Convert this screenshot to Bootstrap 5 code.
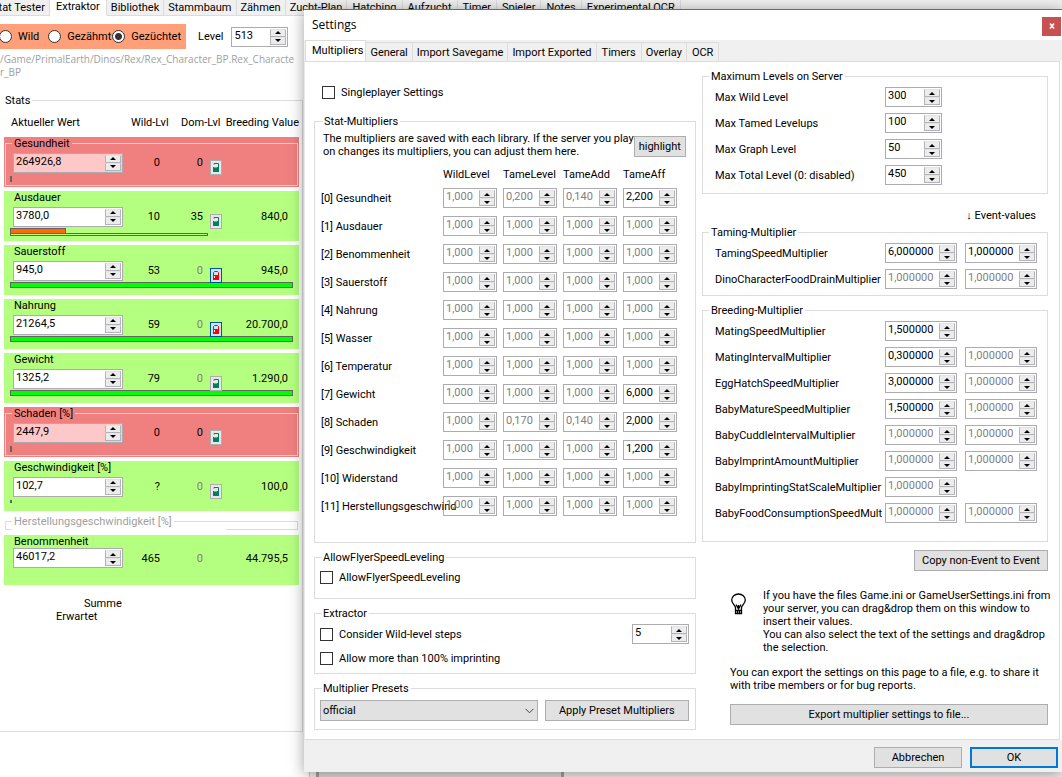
<!DOCTYPE html>
<html lang="de">
<head>
<meta charset="utf-8">
<meta name="viewport" content="width=device-width, initial-scale=1">
<title>Settings</title>
<link href="https://cdn.jsdelivr.net/npm/bootstrap@5.3.0/dist/css/bootstrap.min.css" rel="stylesheet">
<style>
  body { font: 11px/13px Roboto, "Liberation Sans", sans-serif; color: #000; background: #fff; }
  fieldset { border: 1px solid #dcdcdc; position: relative; min-width: 0; }
  legend { float: none; width: auto; font-size: 11px; line-height: 13px; margin: 0 0 0 6px; padding: 0 2px; white-space: nowrap; }
  label { white-space: nowrap; }

  /* numeric up-down */
  .spin { display: inline-flex; height: 20px; border: 1px solid #acacb0; background: #fff; padding: 1px; }
  .spin input { flex: 1 1 0; min-width: 0; width: 0; border: 0; padding: 0 0 2px 1px; background: transparent; color: inherit; font-size: 11px; line-height: 14px; outline: 0; }
  .spin .arrows { display: flex; flex-direction: column; width: 16px; flex: none; background: #f0f0f0; }
  .spin .arrows button { flex: 1; border: 1px solid #b4b4b8; border-top-color: #e4e4e4; background: #ececec; padding: 0; display: flex; align-items: center; justify-content: center; }
  .arrows button::before { content: ""; border: 3px solid transparent; border-top: 0; border-bottom-color: #000; }
  .arrows button + button::before { border: 3px solid transparent; border-bottom: 0; border-top-color: #000; }
  .w-stat { width: 54px; } .w-lvl { width: 57px; } .w-mult { width: 72px; } .w-value { width: 110px; }
  .dim { color: #808080; }

  /* tabs */
  .tabstrip { background: #f0f0f0; }
  .tabstrip button { border: 1px solid #dcdcdc; border-left: 0; background: #f0f0f0; color: #000; padding: 0 4px; white-space: nowrap; flex: none; }
  .tabstrip button.current { background: #fff; border-bottom-color: #fff; }
  .app-tabs { height: 16px; overflow: hidden; margin-left: -12px; }
  .app-tabs button { border-top: 0; height: 16px; }
  .app-tabs button:nth-child(n+7) { padding: 0 5px; }
  .app-tabs button.current { padding: 0 6px 4px; }

  .push { border: 1px solid #adadad; background: #e1e1e1; color: #000; height: 21px; padding: 0 4px; white-space: nowrap; }
  .push.default { border: 2px solid #0078d7; }
  .tick { appearance: none; width: 13px; height: 13px; border: 1px solid #333; background: #fff; margin: 0; flex: none; }
  .rad { appearance: none; width: 13px; height: 13px; border: 1px solid #333; border-radius: 50%; background: #fff; margin: 0; flex: none; }
  .rad:checked { background: radial-gradient(circle, #333 0 3px, #fff 4px); }
  .tick + label, .rad + label { padding-left: 6px; }

  /* extractor page */
  .extractor { width: 303px; }
  .kinds { background: #ffa07a; height: 25px; width: 187px; margin-left: -1px; padding-right: 1px; justify-content: space-between; padding-right: 5px; }
  .path { color: #a0a0a0; white-space: nowrap; font-family: "Open Sans", sans-serif; font-size: 10px; }
  .stats { border-width: 1px 1px 1px 0; height: 638px; padding: 0 3px 0 4px; margin-top: 15px; }
  .stats > legend { margin-left: 0; padding-left: 5px; }
  .stats > legend { margin-left: -4px; background: #fff; }
  .statcols, .statrow { display: grid; align-items: center; }
  .statcols { grid-template-columns: 120px 46px 44px 1fr; padding: 4px 0 0 7px; height: 26px; white-space: nowrap; }
  .stat { height: 50px; margin-bottom: 4px; padding: 0 1px 1px; background: #b4ff80; }
  .stat.bad { background: #f08080; }
  .stat fieldset { height: 49px; padding: 0; }
  .stat .spin.bad-value { background: #ffc8c8; }
  .statrow { grid-template-columns: 110px 37px 43px 22px 1fr; padding: 0 9px 0 7px; height: 20px; text-align: right; }
  .lock { width: 12px; height: 15px; border: 1px solid #adadad; background: #e8e8e8; padding: 0; display: flex; align-items: center; justify-content: center; margin: 10px 0 0 7px; }
  .lock svg { flex: none; }
  .lock.on { border-color: #00549c; background: #cce4f7; }
  .bars { padding-left: 4px; margin-top: 4px; }
  .meter { height: 6px; border: 1px solid #646464; }
  .meter.thin { height: 3px; margin-top: -1px; }
  .stub { width: 2px; height: 6px; background: #646464; margin-top: 6px; }
  .stub.tiny { height: 3px; }
  .craft { height: 15px; margin: 0 1px 5px; color: #a0a0a0; }
  .craft::after { content: ""; position: absolute; left: 5px; right: 71px; bottom: -1px; height: 1px; background: #fff; }

  .behind { border-left: 1px solid #c8c8c8; background: #f0f0f0; margin-left: 6px; }
  .behind .panelbox { width: 248px; margin-left: 6px; border: solid #a0a0a0; border-width: 0 3px; background: #dedede; }

  /* settings dialog */
  .settings { position: absolute; top: 9px; left: 304px; right: 0; border-top: 1px solid #6a6a6a; background: #fff; box-shadow: 0 2px 14px rgba(0,0,0,.38); }
  .titlebar { height: 30px; font: 12px/16px "Open Sans", sans-serif; padding: 0 1px 0 8px; }
  .close-x { width: 19px; height: 19px; background: #c75050; border: 0; padding: 0; display: flex; align-items: center; justify-content: center; margin-top: 2px; }
  .set-tabs { height: 21px; padding-left: 1px; }
  .set-tabs button { height: 19px; border-bottom: 0; }
  .set-tabs button.current { height: 21px; padding: 0 2px 2px 6px; border-left: 1px solid #dcdcdc; }
  .set-tabs .roomy { padding: 0 5px; }
  .set-page { margin-right: 2px; border: 1px solid #dcdcdc; border-left-color: #e8e8e8; padding: 8px 11px 9px 9px; gap: 6px; }
  .col-main { flex: 382 1 0; min-width: 0; }
  .col-side { flex: 346 1 0; min-width: 0; }
  .col-main legend { margin-left: 2px; padding-left: 1px; }
  .grp { padding: 0 6px 0 5px; }
  .grp-stat { padding: 0 12px 22px 6px; }
  .grp-stat .intro { padding: 4px 0 0 2px; white-space: nowrap; }
  .grp-fly { padding-bottom: 14px; }
  .fly-row { padding-top: 7px; }
  .multi { table-layout: fixed; width: 100%; margin: 0; }
  .multi .num { width: 60px; }
  .multi th { font-weight: 400; padding: 0; white-space: nowrap; }
  .multi thead th { height: 26px; vertical-align: bottom; padding-bottom: 3px; }
  .multi td { padding: 0; height: 28px; }
  .multi td .spin { display: flex; margin-left: auto; margin-right: 6px; }
  .multi thead th { text-align: left; }
  .sliders { display: grid; grid-template-columns: minmax(0, 1fr) 72px 72px; column-gap: 8px; grid-auto-rows: 20px; row-gap: 6px; align-items: center; padding: 4px 10px 0 12px; }
  .sliders label { grid-column: 1; }
  .events-head { padding: 15px 12px 4px 0; text-align: right; }
  .grp-taming { padding-bottom: 6px; }
  .grp-breeding { padding-bottom: 18px; }
  .presets { display: grid; grid-template-columns: 217fr 144fr; gap: 7px; padding-top: 5px; }
  .picker { appearance: none; border: 1px solid #adadad; border-radius: 0; background: #e1e1e1; height: 21px; padding: 0 2px; color: #000; width: 100%; }
  .pickwrap { position: relative; }
  .pickwrap svg { position: absolute; right: 4px; top: 8px; pointer-events: none; }
  .wide { min-width: 134px; }
  .tip { padding: 18px 0 0 28px; }
  .foot { background: #f0f0f0; height: 32px; padding: 7px 4px 0 0; gap: 8px; }
  .foot .push { width: 88px; }
</style>
</head>
<body>
<div class="d-flex flex-column min-vh-100 overflow-hidden">
  <nav class="tabstrip" aria-label="Hauptbereiche">
    <div class="app-tabs d-flex">
      <button type="button">Stat Tester</button><button type="button" class="current">Extraktor</button><button type="button">Bibliothek</button><button type="button">Stammbaum</button><button type="button">Zähmen</button><button type="button">Zucht-Plan</button><button type="button">Hatching</button><button type="button">Aufzucht</button><button type="button">Timer</button><button type="button">Spieler</button><button type="button">Notes</button><button type="button">Experimental OCR</button>
    </div>
  </nav>
  <div class="d-flex flex-grow-1">
    <section class="extractor flex-shrink-0">
      <div class="d-flex align-items-center mt-2">
        <div class="kinds d-flex align-items-center">
          <span class="d-flex align-items-center"><input class="rad" type="radio" name="kind" id="k1"><label for="k1" class="pe-2">Wild</label></span>
          <span class="d-flex align-items-center"><input class="rad" type="radio" name="kind" id="k2"><label for="k2">Gezähmt</label></span>
          <span class="d-flex align-items-center"><input class="rad" type="radio" name="kind" id="k3" checked><label for="k3">Gezüchtet</label></span>
        </div>
        <label for="lvl" class="ms-2 me-2 ps-1">Level</label>
        <span class="spin w-lvl"><input id="lvl" value="513"><span class="arrows"><button type="button" aria-label="+"></button><button type="button" aria-label="-"></button></span></span>
      </div>
      <div class="path mt-1">/Game/PrimalEarth/Dinos/Rex/Rex_Character_BP.Rex_Characte<br>r_BP</div>
      <fieldset class="stats">
        <legend>Stats</legend>
        <div class="statcols mb-1"><span>Aktueller Wert</span><span>Wild-Lvl</span><span class="ms-1">Dom-Lvl</span><span class="text-end">Breeding Value</span></div>
        <div id="stats"></div>
        <div class="ps-5 pt-2"><div class="ps-4 ms-2">Summe</div><div class="ms-1">Erwartet</div></div>
      </fieldset>
    </section>
    <div class="behind flex-grow-1 d-flex"><div class="panelbox"></div></div>
  </div>
</div>

<main class="settings" role="dialog" aria-label="Settings">
  <header class="titlebar d-flex align-items-center justify-content-between">
    <span>Settings</span>
    <button type="button" class="close-x" aria-label="Close"><svg width="6" height="6" viewBox="0 0 6 6"><path d="M1 .5 5 5.5M5 .5 1 5.5" stroke="#fff" stroke-width="1.6"/></svg></button>
  </header>
  <nav class="tabstrip set-tabs d-flex align-items-end" aria-label="Settings">
    <button type="button" class="current">Multipliers</button><button type="button">General</button><button type="button">Import Savegame</button><button type="button">Import Exported</button><button type="button" class="roomy">Timers</button><button type="button">Overlay</button><button type="button" class="roomy">OCR</button>
  </nav>
  <div class="set-page d-flex">
    <div class="col-main d-flex flex-column">
      <div class="d-flex align-items-center ps-2 py-3"><input class="tick" type="checkbox" id="sp"><label for="sp">Singleplayer Settings</label></div>
      <fieldset class="grp-stat">
        <legend>Stat-Multipliers</legend>
        <div class="d-flex justify-content-between align-items-start">
          <div class="intro">The multipliers are saved with each library. If the server you play<br>on changes its multipliers, you can adjust them here.</div>
          <button type="button" class="push mt-2 me-n1">highlight</button>
        </div>
        <table class="multi">
          <colgroup><col><col class="num"><col class="num"><col class="num"><col class="num"></colgroup>
          <thead><tr><th></th><th scope="col">WildLevel</th><th scope="col">TameLevel</th><th scope="col">TameAdd</th><th scope="col">TameAff</th></tr></thead>
          <tbody id="multi"></tbody>
        </table>
      </fieldset>
      <fieldset class="mt-2 grp grp-fly">
        <legend>AllowFlyerSpeedLeveling</legend>
        <div class="d-flex align-items-center fly-row"><input class="tick" type="checkbox" id="fly"><label for="fly">AllowFlyerSpeedLeveling</label></div>
      </fieldset>
      <fieldset class="mt-2 grp pb-2">
        <legend>Extractor</legend>
        <div class="d-flex align-items-center justify-content-between pt-1">
          <div class="d-flex align-items-center"><input class="tick" type="checkbox" id="wls"><label for="wls">Consider Wild-level steps</label></div>
          <span class="spin w-lvl"><input aria-label="Wild-level steps" value="5"><span class="arrows"><button type="button" aria-label="+"></button><button type="button" aria-label="-"></button></span></span>
        </div>
        <div class="d-flex align-items-center pt-2"><input class="tick" type="checkbox" id="imp"><label for="imp">Allow more than 100% imprinting</label></div>
      </fieldset>
      <fieldset class="mt-2 grp pb-2">
        <legend>Multiplier Presets</legend>
        <div class="presets">
          <div class="pickwrap"><select class="picker" aria-label="Multiplier Presets"><option>official</option></select><svg width="9" height="6" viewBox="0 0 9 6"><path d="M.5 .8 4.5 4.8 8.5 .8" fill="none" stroke="#444"/></svg></div>
          <button type="button" class="push">Apply Preset Multipliers</button>
        </div>
      </fieldset>
    </div>
    <div class="col-side">
      <fieldset class="pb-2">
        <legend>Maximum Levels on Server</legend>
        <div class="sliders" id="maxlevels"></div>
      </fieldset>
      <div class="events-head">↓ Event-values</div>
      <fieldset class="grp-taming">
        <legend>Taming-Multiplier</legend>
        <div class="sliders" id="taming"></div>
      </fieldset>
      <fieldset class="mt-2 grp-breeding">
        <legend>Breeding-Multiplier</legend>
        <div class="sliders" id="breeding"></div>
      </fieldset>
      <div class="text-end pt-2"><button type="button" class="push wide">Copy non-Event to Event</button></div>
      <div class="d-flex tip">
        <svg class="flex-shrink-0 mt-1" width="17" height="23" viewBox="0 0 17 23" fill="none" stroke="#000" stroke-width="1.3"><path d="M5.500 14.500C5 12 1.700 10.500 1.700 7A6.800 6 0 0 1 15.300 7C15.300 10.500 12 12 11.500 14.500M5.500 14V20.500H11.500V14M5.500 17.500H11.500M6 11.500 8 15 8.500 12 9 15 11 11.500M7.500 17.500V20M9.500 17.500V20"/></svg>
        <div class="ps-3 text-nowrap">If you have the files Game.ini or GameUserSettings.ini from<br>your server, you can drag&amp;drop them on this window to<br>insert their values.<br>You can also select the text of the settings and drag&amp;drop<br>the selection.</div>
      </div>
      <div class="ps-4 ms-1 pt-2 mt-1 text-nowrap">You can export the settings on this page to a file, e.g. to share it<br>with tribe members or for bug reports.</div>
      <div class="ps-4 ms-1 pt-2 mt-1"><button type="button" class="push w-100">Export multiplier settings to file...</button></div>
    </div>
  </div>
  <footer class="foot d-flex justify-content-end"><button type="button" class="push">Abbrechen</button><button type="button" class="push default">OK</button></footer>
</main>

<script src="https://cdn.jsdelivr.net/npm/bootstrap@5.3.0/dist/js/bootstrap.bundle.min.js"></script>
<script>
  const spin = (value, cls, label, id) =>
    `<span class="spin ${cls}"><input value="${value}" aria-label="${label}"${id ? ` id="${id}"` : ''}><span class="arrows"><button type="button" aria-label="+"></button><button type="button" aria-label="-"></button></span></span>`;
  const byId = id => document.getElementById(id);

  // Stat multipliers; values that equal the game default are dimmed
  const heads = ['WildLevel', 'TameLevel', 'TameAdd', 'TameAff'];
  const one = '1,000';
  const special = {
    0: [one, '0,200', '0,140', '2,200'], 7: [one, one, one, '6,000'],
    8: [one, '0,170', '0,140', '2,000'], 9: [one, one, one, '1,200']
  };
  byId('multi').innerHTML = ['Gesundheit', 'Ausdauer', 'Benommenheit', 'Sauerstoff', 'Nahrung', 'Wasser', 'Temperatur', 'Gewicht', 'Schaden', 'Geschwindigkeit', 'Widerstand', 'Herstellungsgeschwind']
    .map((name, i) => `<tr><th scope="row">[${i}] ${name}</th>` + (special[i] || [one, one, one, one])
      .map((v, c) => `<td>${spin(v, 'w-stat' + (c === 3 && v !== one ? '' : ' dim'), name + ' ' + heads[c])}</td>`).join('') + '</tr>').join('');

  // Right-hand settings: [label, value, event value]
  const fill = (target, cls, def, rows) => byId(target).innerHTML = rows.map(([name, a, b], i) =>
    `<label for="${target}${i}">${name}</label>` + spin(a, cls + (a === def ? ' dim' : ''), name, target + i) +
    (b ? spin(b, cls + (b === def && name !== 'TamingSpeedMultiplier' ? ' dim' : ''), name + ' Event') : '')).join('');
  const d = '1,000000';
  fill('maxlevels', 'w-lvl', '', [['Max Wild Level', '300'], ['Max Tamed Levelups', '100'], ['Max Graph Level', '50'], ['Max Total Level (0: disabled)', '450']]);
  fill('taming', 'w-mult', d, [['TamingSpeedMultiplier', '6,000000', d], ['DinoCharacterFoodDrainMultiplier', d, d]]);
  fill('breeding', 'w-mult', d, [['MatingSpeedMultiplier', '1,500000'], ['MatingIntervalMultiplier', '0,300000', d], ['EggHatchSpeedMultiplier', '3,000000', d], ['BabyMatureSpeedMultiplier', '1,500000', d], ['BabyCuddleIntervalMultiplier', d, d], ['BabyImprintAmountMultiplier', d, d], ['BabyImprintingStatScaleMultiplier', d], ['BabyFoodConsumptionSpeedMult', d, d]]);

  // Extracted stats
  const lockIcon = on => on
    ? '<svg width="6" height="9" viewBox="0 0 6 9"><path d="M.5 5V1.500L1.500 .5H4.500L5.500 1.500V5" fill="none" stroke="#f00"/><path d="M0 4h6v5H0z" fill="#f00"/><path d="M1 5h1v2H1z" fill="#fff"/></svg>'
    : '<svg width="6" height="9" viewBox="0 0 6 9"><path d="M1 1.500V.5H5.500V4" fill="none" stroke="#007d64"/><path d="M0 4h6v5H0z" fill="#007d64"/><path d="M1 4h3v1H1z" fill="#4cbfa5"/></svg>';
  const rows = [
    { n: 'Gesundheit', v: '264926,8', w: '0', d: '0', bad: 1, lock: 0 },
    { n: 'Ausdauer', v: '3780,0', w: '10', d: '35', b: '840,0', lock: 0, bar: 56, dom: 198 },
    { n: 'Sauerstoff', v: '945,0', w: '53', d: '0', b: '945,0', lock: 1, bar: 283 },
    { n: 'Nahrung', v: '21264,5', w: '59', d: '0', b: '20.700,0', lock: 1, bar: 283 },
    { n: 'Gewicht', v: '1325,2', w: '79', d: '0', b: '1.290,0', lock: 0, bar: 283 },
    { n: 'Schaden [%]', v: '2447,9', w: '0', d: '0', bad: 1, lock: 0 },
    { n: 'Geschwindigkeit [%]', v: '102,7', w: '?', d: '0', b: '100,0', lock: 0, tiny: 1 },
    { craft: 1 },
    { n: 'Benommenheit', v: '46017,2', w: '465', d: '0', b: '44.795,5', none: 1 }
  ];
  byId('stats').innerHTML = rows.map(r => r.craft
    ? '<fieldset class="craft"><legend>Herstellungsgeschwindigkeit [%]</legend></fieldset>'
    : `<div class="stat ${r.bad ? 'bad' : ''}"><fieldset><legend>${r.n}</legend><div class="statrow">
        ${spin(r.v, 'w-value' + (r.bad ? ' bad-value' : ''), r.n)}<span>${r.w}</span><span class="${r.d === '0' && !r.bad ? 'dim' : ''}">${r.d}</span>
        <span>${r.none ? '' : `<button type="button" class="lock ${r.lock ? 'on' : ''}" aria-label="Lock">${lockIcon(r.lock)}</button>`}</span><span>${r.b || ''}</span></div>
        <div class="bars">${r.bar ? `<div class="meter" style="width:${r.bar}px;background:${r.bar < 100 ? '#ff6a00' : '#0f0'}"></div>` : r.none ? '' : `<div class="stub ${r.tiny ? 'tiny' : ''}"></div>`}${r.dom ? `<div class="meter thin" style="width:${r.dom}px"></div>` : ''}</div></fieldset></div>`).join('');
</script>
</body>
</html>
